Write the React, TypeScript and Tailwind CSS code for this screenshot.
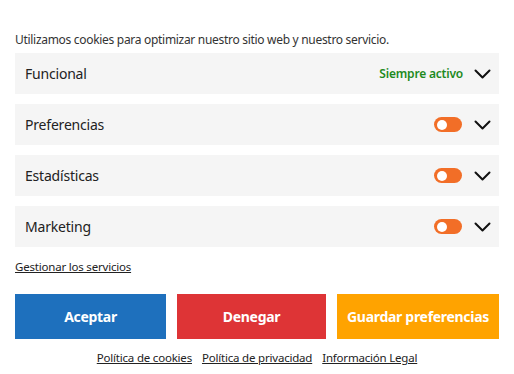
const categories = [
  { name: "Funcional", always: true },
  { name: "Preferencias", always: false },
  { name: "Estadísticas", always: false },
  { name: "Marketing", always: false },
];

function Chevron() {
  return (
    <svg width="17" height="10" viewBox="0 0 17 10" fill="none" className="shrink-0">
      <path d="M1.5 1.5L8.5 8.5L15.5 1.5" stroke="#111" strokeWidth="2" strokeLinecap="round" strokeLinejoin="round" />
    </svg>
  );
}

function Toggle() {
  return (
    <div className="w-[28px] h-[15px] rounded-full bg-[#f26e27] flex items-center pl-[3px] shrink-0">
      <div className="w-[10px] h-[10px] rounded-full bg-white" />
    </div>
  );
}

export default function App() {
  return (
    <div
      className="w-[514px] h-[374px] bg-white px-[15px] pt-[31px] text-[#333]"
      style={{ fontFamily: '"Noto Sans", "Open Sans", sans-serif' }}
    >
      <p className="text-[12px] leading-[17px] tracking-[-0.3px]">
        Utilizamos cookies para optimizar nuestro sitio web y nuestro servicio.
      </p>

      <div className="mt-[5px] flex flex-col gap-[10px]">
        {categories.map((c) => (
          <div
            key={c.name}
            className="h-[41px] bg-[#f5f5f5] flex items-center pl-[10px] pr-[8px]"
          >
            <span className="text-[14px] tracking-[-0.2px] text-[#222] flex-1">{c.name}</span>
            {c.always ? (
              <span className="text-[12px] font-semibold tracking-[-0.2px] text-[#1d8a1d] mr-[11px]">
                Siempre activo
              </span>
            ) : (
              <div className="mr-[12px]">
                <Toggle />
              </div>
            )}
            <Chevron />
          </div>
        ))}
      </div>

      <a href="#" className="block mt-[12px] text-[11.5px] leading-[16px] underline tracking-[-0.2px] text-[#222]">
        Gestionar los servicios
      </a>

      <div className="mt-[19px] flex gap-[11px]">
        <button className="w-[151px] h-[45px] bg-[#1e70bd] text-white text-[14px] font-bold tracking-[-0.3px]">
          Aceptar
        </button>
        <button className="w-[149px] h-[45px] bg-[#de3436] text-white text-[14px] font-bold tracking-[-0.3px]">
          Denegar
        </button>
        <button className="w-[162px] h-[45px] bg-[#ffa300] text-white text-[14px] font-bold tracking-[-0.3px]">
          Guardar preferencias
        </button>
      </div>

      <div className="mt-[10px] flex justify-center gap-[10px] text-[11.5px] tracking-[-0.2px] text-[#222]">
        <a href="#" className="underline">Política de cookies</a>
        <a href="#" className="underline">Política de privacidad</a>
        <a href="#" className="underline">Información Legal</a>
      </div>
    </div>
  );
}
